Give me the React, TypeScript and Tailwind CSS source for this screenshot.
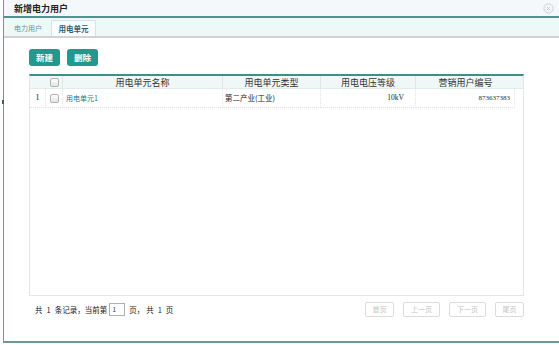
import React from "react";

const font = { fontFamily: '"Noto Sans CJK SC", "Noto Sans", sans-serif' };

function Cb() {
  return <span className="inline-block w-[9px] h-[9px] border border-[#b3b3b3] rounded-[2px] bg-gradient-to-b from-[#fdfdfd] to-[#e6e6e6]" />;
}

function PageBtn({ label, w }: { label: string; w: string }) {
  return (
    <div className={`${w} h-[15px] border border-[#dcdcdc] rounded-[2px] flex items-center justify-center text-[7px] text-[#c4c4c4] bg-white`}>
      {label}
    </div>
  );
}

export default function App() {
  return (
    <div className="w-[559px] h-[345px] bg-white overflow-hidden relative" style={font}>
      <div className="ml-[3px] h-[343px] border-l border-b-2 border-[#6f9996] flex flex-col">
        {/* title bar */}
        <div className="h-[18px] bg-[#f4f8fa] border-b-2 border-[#4d948f] flex items-center justify-between pl-[10px] pr-[5px]">
          <span className="text-[9px] font-bold text-[#222] leading-none">新增电力用户</span>
          <svg width="11" height="11" viewBox="0 0 11 11">
            <circle cx="5.5" cy="5.5" r="4.6" fill="none" stroke="#c9cccc" strokeWidth="0.9" />
            <path d="M3.8 3.8 L7.2 7.2 M7.2 3.8 L3.8 7.2" stroke="#c2c6c6" strokeWidth="0.9" />
          </svg>
        </div>
        {/* tab bar */}
        <div className="h-[20px] bg-[#eef8f7] border-b-2 border-[#cfd3d3] flex items-end pl-[3px]">
          <div className="h-[16px] px-[7px] flex items-center text-[7px] text-[#6b8ea3]">电力用户</div>
          <div className="ml-[2px] h-[16px] w-[45px] bg-[#fafdfd] border border-b-0 border-[#d8e2e2] rounded-t-[2px] flex items-center justify-center text-[7.5px] text-[#2c5f78] font-semibold">
            用电单元
          </div>
        </div>
        {/* content */}
        <div className="flex-1 flex flex-col pl-[25px]">
          <div className="mt-[11px] flex gap-[7px]">
            <div className="w-[31px] h-[17px] rounded-[3px] bg-[#1f9a8d] text-white text-[8.5px] font-bold flex items-center justify-center">新建</div>
            <div className="w-[31px] h-[17px] rounded-[3px] bg-[#1f9a8d] text-white text-[8.5px] font-bold flex items-center justify-center">删除</div>
          </div>
          {/* table */}
          <div className="mt-[8px] w-[495px] h-[222px] border border-t-2 border-[#e3e6e6] border-t-[#3f8f89] bg-white flex flex-col">
            <div className="h-[13px] bg-[#eff7f7] flex text-[9px] text-[#333] leading-none border-b border-[#e2eaea]">
              <div className="w-[16px]" />
              <div className="w-[17px] flex items-center justify-center border-r border-[#e0e6e6]"><Cb /></div>
              <div className="w-[160px] flex items-center justify-center border-r border-[#e0e6e6]">用电单元名称</div>
              <div className="w-[98px] flex items-center justify-center border-r border-[#e0e6e6]">用电单元类型</div>
              <div className="w-[95px] flex items-center justify-center border-r border-[#e0e6e6]">用电电压等级</div>
              <div className="w-[99px] flex items-center justify-center">营销用户编号</div>
            </div>
            <div className="h-[19px] flex text-[7px] leading-none">
              <div className="w-[16px] flex items-center justify-center border-r border-b border-dotted border-[#e3e3e3] text-[#222]" style={{ fontFamily: '"Liberation Serif", serif', fontSize: 8 }}>1</div>
              <div className="w-[17px] flex items-center justify-center border-r border-b border-dotted border-[#e3e3e3]"><Cb /></div>
              <div className="w-[160px] flex items-center pl-[3px] border-r border-b border-dotted border-[#e3e3e3] text-[#1d7d80]">用电单元1</div>
              <div className="w-[98px] flex items-center pl-[2px] border-r border-b border-dotted border-[#e3e3e3] text-[#222] text-[7.5px]">第二产业(工业)</div>
              <div className="w-[95px] flex items-center justify-end pr-[11px] border-r border-b border-dotted border-[#e3e3e3] text-[#222]" style={{ fontFamily: '"Liberation Serif", serif', fontSize: 7.5 }}>10kV</div>
              <div className="w-[99px] flex items-center justify-end pr-[4px] border-r border-b border-dotted border-[#e3e3e3] text-[#333]" style={{ fontFamily: '"Liberation Serif", serif' }}>873637383</div>
            </div>
          </div>
          {/* pagination */}
          <div className="mt-[6px] w-[495px] flex items-center justify-between">
            <div className="ml-[6px] flex items-center text-[7.5px] text-[#222] leading-none">
              <span>共</span>
              <span className="mx-[4px]">1</span>
              <span>条记录，当前第</span>
              <div className="ml-[2px] w-[16px] h-[13px] border border-[#a9b3b8] text-[7px] text-[#4a3a8a] pl-[2px] flex items-center">1</div>
              <span className="ml-[4px]">页，</span>
              <span className="ml-[2px]">共</span>
              <span className="mx-[4px]">1</span>
              <span>页</span>
            </div>
            <div className="flex gap-[9px]">
              <PageBtn label="首页" w="w-[29px]" />
              <PageBtn label="上一页" w="w-[37px]" />
              <PageBtn label="下一页" w="w-[37px]" />
              <PageBtn label="尾页" w="w-[29px]" />
            </div>
          </div>
        </div>
      </div>
      <div className="absolute left-[2px] top-[100px] w-[2px] h-[4px] bg-[#555]" />
    </div>
  );
}
